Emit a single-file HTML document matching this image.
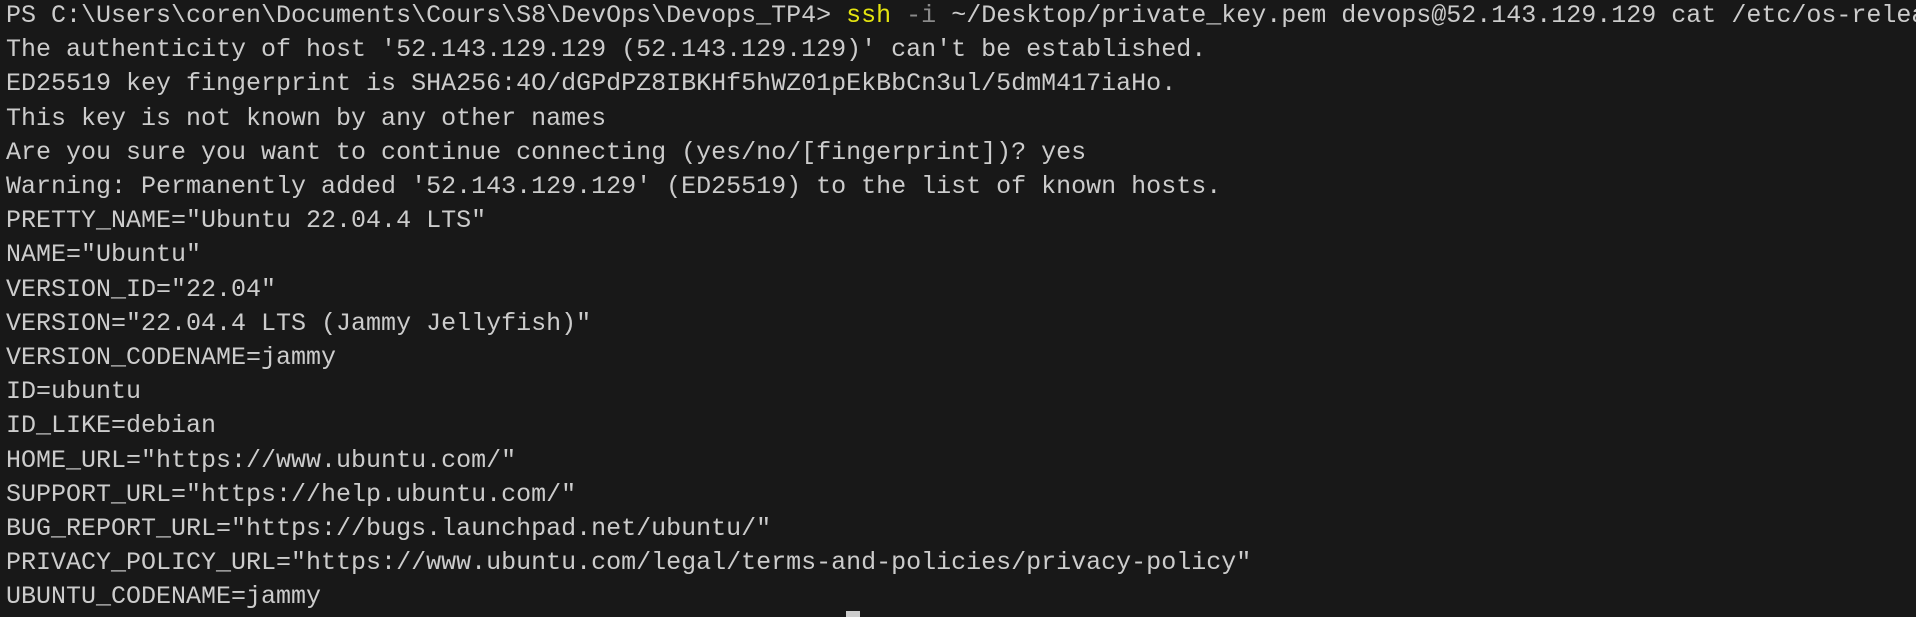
<!DOCTYPE html>
<html><head><meta charset="utf-8"><style>
html,body{margin:0;padding:0;background:#181818;width:1916px;height:616px;overflow:hidden}
pre{margin:0;padding:0 0 0 6px;font-family:"Liberation Mono",monospace;font-size:25px;line-height:34.2px;color:#cccccc;white-space:pre;position:absolute;top:-1px;left:0}
.y{color:#e5e510}.g{color:#8a8a8a}
.cur{position:absolute;left:846px;top:611px;width:14px;height:6px;background:#cccccc}
</style></head><body>
<pre>PS C:\Users\coren\Documents\Cours\S8\DevOps\Devops_TP4&gt; <span class="y">ssh</span> <span class="g">-i</span> ~/Desktop/private_key.pem devops@52.143.129.129 cat /etc/os-release
The authenticity of host '52.143.129.129 (52.143.129.129)' can't be established.
ED25519 key fingerprint is SHA256:4O/dGPdPZ8IBKHf5hWZ01pEkBbCn3ul/5dmM417iaHo.
This key is not known by any other names
Are you sure you want to continue connecting (yes/no/[fingerprint])? yes
Warning: Permanently added '52.143.129.129' (ED25519) to the list of known hosts.
PRETTY_NAME="Ubuntu 22.04.4 LTS"
NAME="Ubuntu"
VERSION_ID="22.04"
VERSION="22.04.4 LTS (Jammy Jellyfish)"
VERSION_CODENAME=jammy
ID=ubuntu
ID_LIKE=debian
HOME_URL="https://www.ubuntu.com/"
SUPPORT_URL="https://help.ubuntu.com/"
BUG_REPORT_URL="https://bugs.launchpad.net/ubuntu/"
PRIVACY_POLICY_URL="https://www.ubuntu.com/legal/terms-and-policies/privacy-policy"
UBUNTU_CODENAME=jammy</pre>
<div class="cur"></div>
</body></html>
